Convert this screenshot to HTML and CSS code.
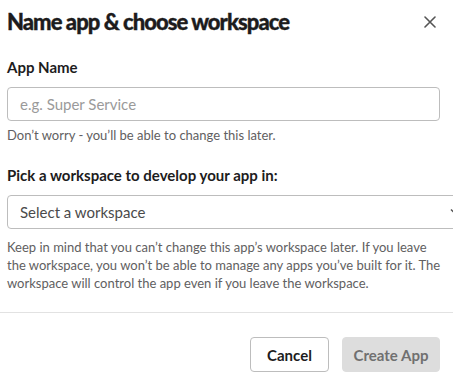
FILE: index.html
```html
<!DOCTYPE html>
<html>
<head>
<meta charset="utf-8">
<link rel="stylesheet" href="styles.css">
</head>
<body>
<div class="modal">
  <div class="header">
    <h1 class="title">Name app &amp; choose workspace</h1>
    <button class="close" aria-label="Close">
      <svg width="12" height="12" viewBox="0 0 12 12"><path d="M1 1L11 11M11 1L1 11" stroke="#555" stroke-width="1.6" stroke-linecap="round"/></svg>
    </button>
  </div>
  <div class="body">
    <label class="label">App Name</label>
    <div class="input">e.g. Super Service</div>
    <p class="hint">Don’t worry - you’ll be able to change this later.</p>
    <label class="label label-2">Pick a workspace to develop your app in:</label>
    <div class="select">
      <span>Select a workspace</span>
      <svg class="chev" width="12" height="8" viewBox="0 0 12 8"><path d="M1 1.5L6 6.5L11 1.5" fill="none" stroke="#555" stroke-width="1.5"/></svg>
    </div>
    <p class="note">Keep in mind that you can’t change this app’s workspace later. If you leave the workspace, you won’t be able to manage any apps you’ve built for it. The workspace will control the app even if you leave the workspace.</p>
  </div>
  <div class="footer">
    <button class="btn btn-cancel">Cancel</button>
    <button class="btn btn-create">Create App</button>
  </div>
</div>
</body>
</html>
```
FILE: styles.css
```css
html, body {
  margin: 0;
  padding: 0;
  background: #fff;
  overflow: hidden;
}
body {
  font-family: Lato, "Open Sans", sans-serif;
  color: #1d1c1d;
  width: 453px;
  height: 382px;
}
.modal {
  width: 453px;
}
.header {
  display: flex;
  align-items: center;
  justify-content: space-between;
  padding: 8px 17px 0 7px;
  height: 28px;
}
.title {
  margin: 0;
  font-size: 22px;
  font-weight: 900;
  letter-spacing: -0.95px;
  line-height: 28px;
  -webkit-text-stroke: 0.35px #1d1c1d;
}
.close {
  border: 0;
  background: none;
  padding: 0;
  width: 12px;
  height: 12px;
  display: flex;
}
.body {
  padding: 0 13px 0 7px;
}
.label {
  display: block;
  font-size: 15px;
  font-weight: 700;
  line-height: 22px;
  margin-top: 20px;
}
.label-2 {
  margin-top: 20px;
}
.input {
  margin-top: 9px;
  height: 32px;
  border: 1px solid #bdbdbd;
  border-radius: 4px;
  padding: 0 12px;
  font-size: 15px;
  line-height: 32px;
  color: #9a9a9a;
}
.hint {
  margin: 5px 0 0;
  font-size: 13px;
  line-height: 18px;
  color: #616061;
}
.select {
  margin-top: 9px;
  width: 460px;
  box-sizing: border-box;
  height: 34px;
  border: 1px solid #bdbdbd;
  border-radius: 4px;
  padding: 0 12px;
  font-size: 15px;
  color: #1d1c1d;
  display: flex;
  align-items: center;
  justify-content: space-between;
}
.select span {
  color: #4a4a4a;
}
.chev {
  margin-right: -8px;
}
.note {
  margin: 9px -6px 0 0;
  font-size: 13px;
  line-height: 18px;
  color: #616061;
}
.footer {
  margin-top: 20px;
  border-top: 1px solid #e2e2e2;
  display: flex;
  justify-content: flex-end;
  gap: 13px;
  padding: 24px 13px 0 0;
}
.btn {
  box-sizing: border-box;
  height: 35px;
  border-radius: 4px;
  font-family: Lato, "Open Sans", sans-serif;
  font-size: 15px;
  font-weight: 700;
  padding: 0;
  white-space: nowrap;
}
.btn-cancel {
  background: #fff;
  border: 1px solid #bdbdbd;
  color: #1d1c1d;
  width: 79px;
}
.btn-create {
  background: #dddddd;
  border: 1px solid #dddddd;
  color: #707070;
  width: 98px;
}
```
